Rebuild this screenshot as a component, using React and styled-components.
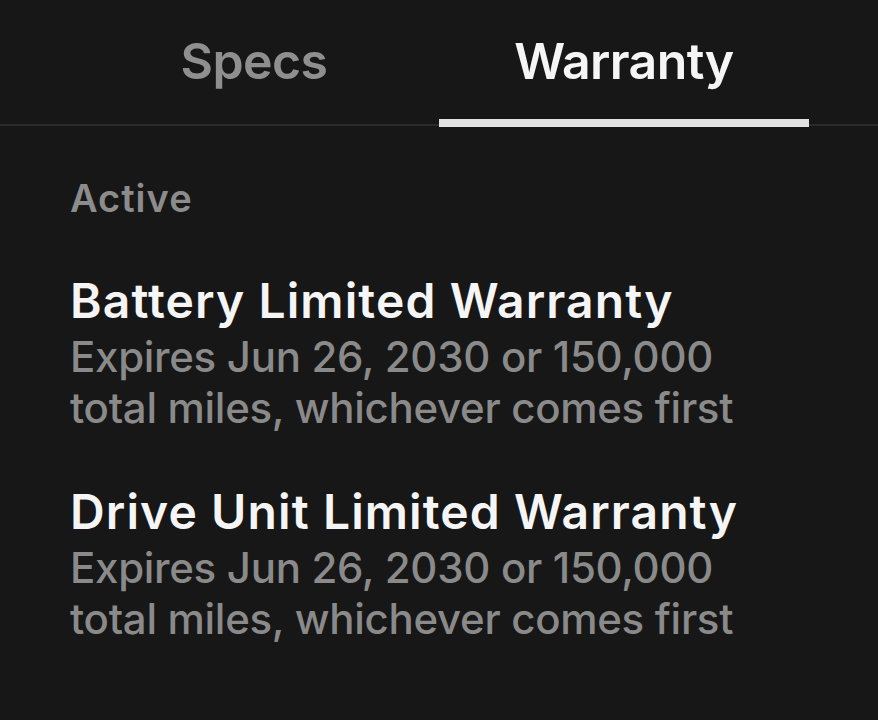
import React, { useState } from 'react';
import styled, { createGlobalStyle } from 'styled-components';

const GlobalStyle = createGlobalStyle`
  html, body {
    margin: 0;
    padding: 0;
    background: #171717;
  }
  body {
    font-family: Inter, "Noto Sans", "Liberation Sans", sans-serif;
    -webkit-font-smoothing: antialiased;
  }
`;

const Page = styled.div`
  width: 878px;
  min-height: 720px;
  background: #171717;
`;

const TabBar = styled.div`
  display: flex;
  padding: 31px 69px 0;
  border-bottom: 2px solid #2a2a2a;
`;

const Tab = styled.button`
  flex: 1;
  background: none;
  border: none;
  border-bottom: 8px solid ${p => (p.$active ? '#e2e2e2' : 'transparent')};
  margin-bottom: -3px;
  padding: 0 0 28px;
  font-family: inherit;
  font-size: 50px;
  line-height: 60px;
  font-weight: 600;
  letter-spacing: -0.6px;
  color: ${p => (p.$active ? '#f5f5f5' : '#8f8f8f')};
  cursor: pointer;
`;

const Content = styled.div`
  display: flex;
  flex-direction: column;
  padding: 49px 70px 0;
`;

const SectionLabel = styled.div`
  font-size: 38px;
  line-height: 46px;
  font-weight: 600;
  letter-spacing: 1px;
  color: #8c8c8c;
  margin-bottom: 54px;
`;

const List = styled.div`
  display: flex;
  flex-direction: column;
  gap: 53px;
`;

const Item = styled.div`
  display: flex;
  flex-direction: column;
  gap: 4px;
`;

const Title = styled.div`
  font-size: 48px;
  line-height: 52px;
  font-weight: 600;
  letter-spacing: 1.1px;
  color: #f5f5f5;
`;

const Detail = styled.div`
  font-size: 42px;
  line-height: 51px;
  font-weight: 500;
  letter-spacing: -0.3px;
  color: #8a8a8a;
`;

const warranties = [
  { name: 'Battery Limited Warranty', lines: ['Expires Jun 26, 2030 or 150,000', 'total miles, whichever comes first'] },
  { name: 'Drive Unit Limited Warranty', lines: ['Expires Jun 26, 2030 or 150,000', 'total miles, whichever comes first'] },
];

const App = () => {
  const [tab, setTab] = useState('warranty');
  return (
    <Page>
      <GlobalStyle />
      <TabBar>
        <Tab $active={tab === 'specs'} onClick={() => setTab('specs')}>Specs</Tab>
        <Tab $active={tab === 'warranty'} onClick={() => setTab('warranty')}>Warranty</Tab>
      </TabBar>
      <Content>
        <SectionLabel>Active</SectionLabel>
        <List>
          {warranties.map(w => (
            <Item key={w.name}>
              <Title>{w.name}</Title>
              <Detail>{w.lines[0]}<br />{w.lines[1]}</Detail>
            </Item>
          ))}
        </List>
      </Content>
    </Page>
  );
};

export default App;
